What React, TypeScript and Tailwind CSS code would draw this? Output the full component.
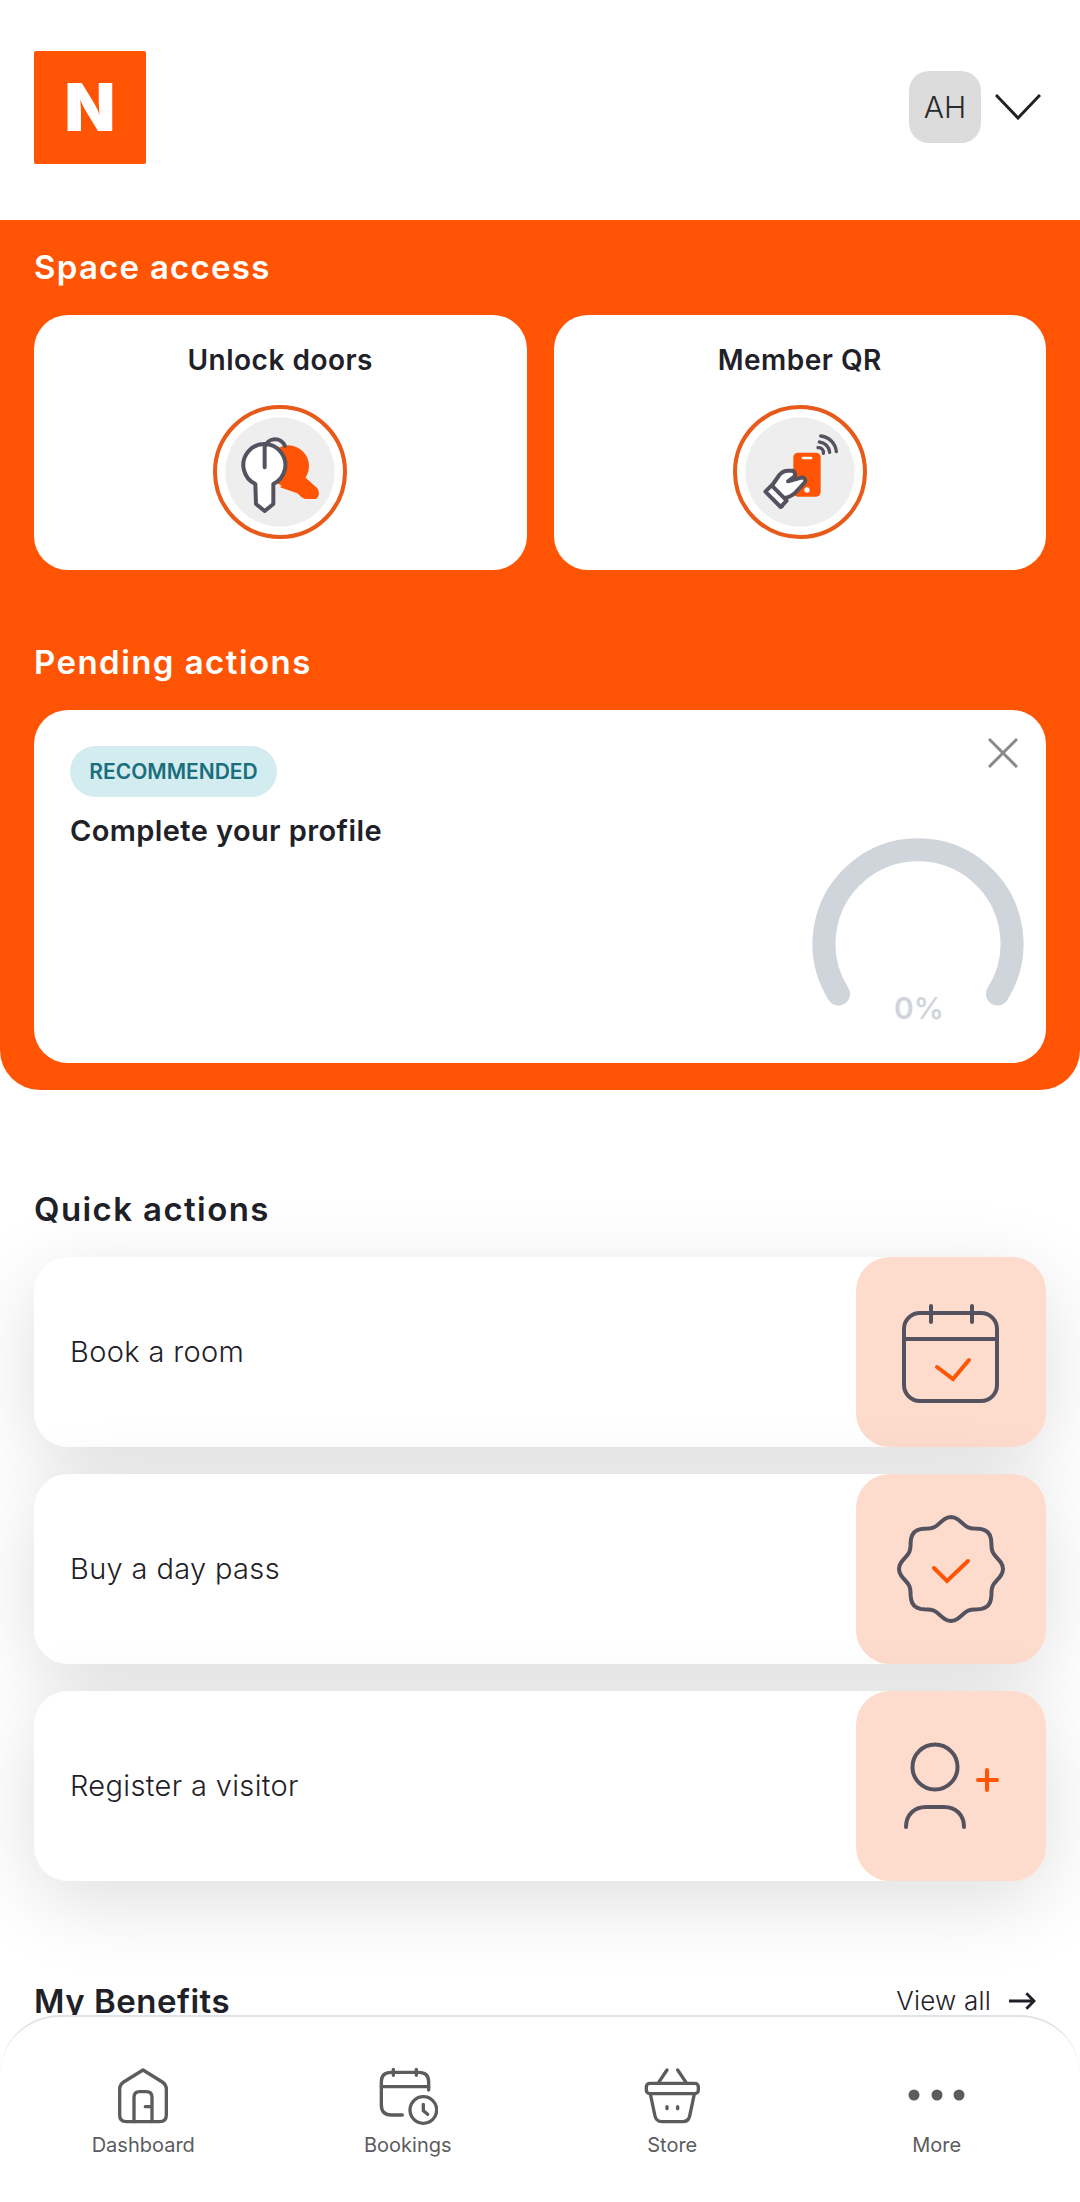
const ink = "#55525f";
const orange = "#ff5403";
const navInk = "#5c5c5f";

const badgePath = () => {
  const pts: string[] = [];
  for (let i = 0; i < 96; i++) {
    const a = (i / 96) * Math.PI * 2;
    const r = 48.5 + 3.5 * Math.cos(8 * a);
    pts.push(`${(95 + r * Math.cos(a)).toFixed(2)} ${(95 + r * Math.sin(a)).toFixed(2)}`);
  }
  return `M${pts.join("L")}Z`;
};

const KeyIcon = () => (
  <svg viewBox="99 75 402 402" className="h-[134px] w-[134px]">
    <circle cx="300" cy="276" r="195" fill="#fff" stroke="#e85a1a" strokeWidth="12" />
    <circle cx="300" cy="276" r="164" fill="#eeeeee" />
    <circle cx="325" cy="258" r="62" fill={orange} />
    <path d="M345 265L412 325Q424 345 408 357H375Q362 352 352 340L300 322Z" fill={orange} />
    <path d="M226 312A63 63 0 1 1 280 312V372L254 393L228 372Z" fill="#fff" stroke={ink} strokeWidth="12" strokeLinejoin="round" />
    <path d="M254 262V202A32 32 0 0 1 315 198" fill="none" stroke={ink} strokeWidth="12" strokeLinecap="round" />
  </svg>
);

const PhoneIcon = () => (
  <svg viewBox="97 75 402 402" className="h-[134px] w-[134px]">
    <circle cx="298" cy="276" r="195" fill="#fff" stroke="#e85a1a" strokeWidth="12" />
    <circle cx="298" cy="276" r="164" fill="#eeeeee" />
    <rect x="278" y="218" width="82" height="132" rx="14" fill={orange} />
    <rect x="303" y="230" width="32" height="8" rx="3" fill="#fff" />
    <circle cx="319" cy="330" r="8" fill="#fff" />
    <g fill="none" stroke={ink} strokeWidth="10" strokeLinecap="round">
      <path d="M352 203A14 14 0 0 1 368 220" />
      <path d="M356 186A34 34 0 0 1 387 217" />
      <path d="M360 168A52 52 0 0 1 407 215" />
    </g>
    <path
      d="M213 318L236 285Q246 272 262 272H275Q285 275 283 288L262 304L305 292Q318 296 312 308L284 338Q270 352 250 354L244 378Z"
      fill="#fff"
      stroke={ink}
      strokeWidth="12"
      strokeLinejoin="round"
    />
    <path d="M194 335L213 316L258 362L240 381Z" fill="#fff" stroke={ink} strokeWidth="12" strokeLinejoin="round" />
  </svg>
);

const CalendarTile = () => (
  <svg viewBox="0 0 190 190" className="h-full w-full" fill="none" strokeLinecap="round" strokeWidth="4">
    <rect x="48" y="56" width="93" height="88" rx="16" stroke={ink} />
    <path d="M48 82H141M75 49V65M116 49V65" stroke={ink} />
    <path d="M81 110L97 122L113 103" stroke={orange} />
  </svg>
);

const BadgeTile = () => (
  <svg viewBox="0 0 190 190" className="h-full w-full" fill="none" strokeLinecap="round" strokeWidth="4">
    <path d={badgePath()} stroke={ink} />
    <path d="M78 94L91 107L112 87" stroke={orange} />
  </svg>
);

const PersonTile = () => (
  <svg viewBox="0 0 190 190" className="h-full w-full" fill="none" strokeLinecap="round" strokeWidth="4">
    <circle cx="79" cy="76" r="22.5" stroke={ink} />
    <path d="M50 136C50 124 58 116 70 116H88C100 116 108 124 108 136" stroke={ink} />
    <path d="M122 89H141M131 79V99" stroke={orange} />
  </svg>
);

const HomeIcon = () => (
  <svg viewBox="100 45 180 180" className="h-[60px] w-[60px]" fill="none" stroke={navInk} strokeWidth="10" strokeLinecap="round" strokeLinejoin="round">
    <path d="M190 60L248 96Q260 104 260 118V195Q260 215 240 215H140Q120 215 120 195V118Q120 104 132 96Z" />
    <path d="M163 215V142Q163 125 180 125H200Q217 125 217 142V215M197 170H215" />
  </svg>
);

const BookingsIcon = () => (
  <svg viewBox="895 45 180 180" className="h-[60px] w-[60px]" fill="none" stroke={navInk} strokeWidth="10" strokeLinecap="round" strokeLinejoin="round">
    <path d="M968 195H935Q905 195 905 165V95Q905 67 935 67H1017Q1047 67 1047 95V120" />
    <path d="M905 110H1047M941 58V76M1010 58V76" />
    <circle cx="1031" cy="180" r="40" />
    <path d="M1031 163V182L1044 193" />
  </svg>
);

const StoreIcon = () => (
  <svg viewBox="65 45 180 180" className="h-[60px] w-[60px]" fill="none" stroke={navInk} strokeWidth="10" strokeLinecap="round" strokeLinejoin="round">
    <rect x="78" y="100" width="156" height="31" rx="10" />
    <path d="M90 132L104 198Q108 215 124 215H188Q204 215 208 198L222 132" />
    <path d="M115 97L140 60M197 97L172 60M140 170V176M172 170V176" />
  </svg>
);

const MoreIcon = () => (
  <svg viewBox="0 0 60 60" className="h-[60px] w-[60px]" fill={navInk}>
    <circle cx="7" cy="30" r="5.5" />
    <circle cx="30" cy="30" r="5.5" />
    <circle cx="52" cy="30" r="5.5" />
  </svg>
);

const actions = [
  { label: "Book a room", icon: <CalendarTile /> },
  { label: "Buy a day pass", icon: <BadgeTile /> },
  { label: "Register a visitor", icon: <PersonTile /> },
];

const nav = [
  { label: "Dashboard", icon: <HomeIcon /> },
  { label: "Bookings", icon: <BookingsIcon /> },
  { label: "Store", icon: <StoreIcon /> },
  { label: "More", icon: <MoreIcon /> },
];

export default function App() {
  return (
    <div className="relative h-[2202px] w-[1080px] overflow-hidden bg-white font-['Inter',sans-serif] text-[#1f2129]">
      {/* HEADER */}
      <header className="flex h-[220px] items-center justify-between pb-[6px] pl-[34px] pr-[39px]">
        <div className="flex h-[113px] w-[112px] items-center justify-center rounded-[2px] bg-[#ff5403] text-[66px] font-black leading-none text-white">
          N
        </div>
        <div className="flex items-center gap-[14px]">
          <div className="flex h-[72px] w-[72px] items-center justify-center rounded-[20px] bg-[#dcdcdc] text-[30px] font-light text-[#2a2a2a]">
            AH
          </div>
          <svg viewBox="0 0 46 26" className="h-[26px] w-[46px]" fill="none" stroke="#222" strokeWidth="3">
            <path d="M1 1L23 24L45 1" />
          </svg>
        </div>
      </header>

      {/* ORANGE PANEL */}
      <section className="rounded-b-[40px] bg-[#ff5403] px-[34px] pb-[27px] pt-[28px]">
        <h2 className="mb-[29px] h-[38px] text-[33px] font-semibold leading-[38px] tracking-[1.25px] text-white">Space access</h2>
        <div className="flex gap-[27px]">
          {[
            { title: "Unlock doors", icon: <KeyIcon /> },
            { title: "Member QR", icon: <PhoneIcon /> },
          ].map((card) => (
            <div key={card.title} className="flex h-[255px] flex-1 flex-col items-center rounded-[34px] bg-white pt-[28px]">
              <h3 className="mb-[28px] h-[34px] text-[28px] font-semibold leading-[34px] tracking-[0.5px]">{card.title}</h3>
              {card.icon}
            </div>
          ))}
        </div>

        <h2 className="mb-[29px] mt-[73px] h-[38px] text-[33px] font-semibold leading-[38px] tracking-[1.45px] text-white">Pending actions</h2>
        <div className="relative h-[353px] rounded-[34px] bg-white pl-[36px] pt-[36px]">
          <div className="flex h-[51px] w-[207px] items-center justify-center rounded-full bg-[#d2ecf0] text-[21px] font-semibold text-[#1a6f7c]">
            RECOMMENDED
          </div>
          <p className="mt-[16px] h-[36px] text-[29px] font-semibold leading-[36px] tracking-[0.4px]">Complete your profile</p>
          <svg viewBox="0 0 30 30" className="absolute right-[28px] top-[28px] h-[30px] w-[30px]" fill="none" stroke="#8a8a8a" strokeWidth="3">
            <path d="M1 1L29 29M29 1L1 29" />
          </svg>
          <svg viewBox="0 0 230 190" className="absolute left-[769px] top-[120px] h-[190px] w-[230px]" fill="none">
            <path d="M35.5 164A94 94 0 1 1 194.5 164" stroke="#cfd5db" strokeWidth="23" strokeLinecap="round" />
          </svg>
          <span className="absolute left-[770px] top-[279px] w-[230px] text-center text-[30px] font-semibold leading-[38px] text-[#cfd5db]">
            0%
          </span>
        </div>
      </section>

      {/* QUICK ACTIONS */}
      <section className="px-[34px] pt-[100px]">
        <h2 className="mb-[29px] h-[38px] text-[33px] font-semibold leading-[38px] tracking-[1.4px]">Quick actions</h2>
        <div className="flex flex-col gap-[27px]">
          {actions.map((action) => (
            <div
              key={action.label}
              className="flex h-[190px] items-center justify-between rounded-[34px] bg-white pl-[36px] shadow-[0_20px_80px_rgba(0,0,0,0.13)]"
            >
              <span className="text-[29px] font-light tracking-[0.35px]">{action.label}</span>
              <div className="h-[190px] w-[190px] rounded-[34px] bg-[#fddccd]">{action.icon}</div>
            </div>
          ))}
        </div>

        <div className="mt-[100px] flex items-center justify-between pr-[10px]">
          <h2 className="h-[38px] text-[33px] font-semibold leading-[38px] tracking-[0.5px]">My Benefits</h2>
          <div className="flex items-center gap-[18px] text-[26px] font-light tracking-[0.2px]">
            View all
            <svg viewBox="0 0 28 20" className="h-[20px] w-[27px]" fill="none" stroke="#1f2129" strokeWidth="3">
              <path d="M0 10H26M18 2L26 10L18 18" />
            </svg>
          </div>
        </div>
      </section>

      {/* BOTTOM NAV */}
      <nav className="absolute bottom-0 left-0 grid h-[187px] w-full grid-cols-4 rounded-t-[60px] border-t-2 border-[#dfe3e8] bg-white px-[11px] pt-[48px]">
        {nav.map((item) => (
          <div key={item.label} className="flex flex-col items-center gap-[7px]">
            {item.icon}
            <span className="text-[20px] leading-[26px] text-[#5c5c5f]">{item.label}</span>
          </div>
        ))}
      </nav>
    </div>
  );
}
